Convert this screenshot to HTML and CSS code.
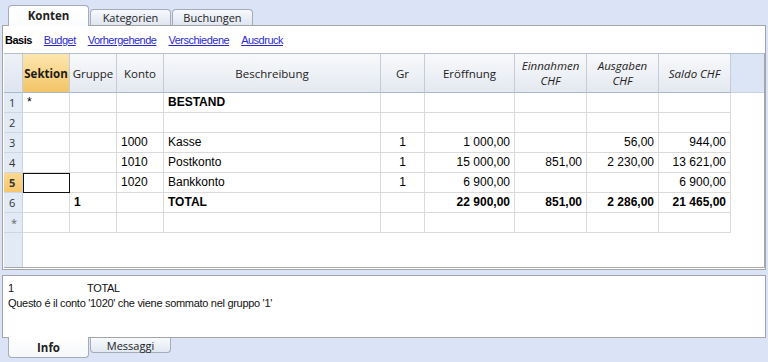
FILE: index.html
```html
<!DOCTYPE html>
<html lang="de">
<head>
<meta charset="utf-8">
<title>Konten</title>
<link rel="stylesheet" href="styles.css">
</head>
<body>
<div class="tabs-top">
  <div class="tab active">Konten</div>
  <div class="tab">Kategorien</div>
  <div class="tab">Buchungen</div>
</div>
<div class="panel">
  <div class="subnav">
    <span class="cur">Basis</span>
    <a href="#">Budget</a>
    <a href="#">Vorhergehende</a>
    <a href="#">Verschiedene</a>
    <a href="#">Ausdruck</a>
  </div>
  <div class="grid">
    <div class="row head">
      <div class="h rn"></div>
      <div class="h sel">Sektion</div>
      <div class="h">Gruppe</div>
      <div class="h">Konto</div>
      <div class="h">Beschreibung</div>
      <div class="h">Gr</div>
      <div class="h">Eröffnung</div>
      <div class="h it">Einnahmen<br>CHF</div>
      <div class="h it">Ausgaben<br>CHF</div>
      <div class="h it">Saldo CHF</div>
      <div class="fill"></div>
    </div>
    <div class="row">
      <div class="c rn">1</div><div class="c">*</div><div class="c"></div><div class="c"></div><div class="c b">BESTAND</div><div class="c"></div><div class="c"></div><div class="c"></div><div class="c"></div><div class="c"></div>
    </div>
    <div class="row">
      <div class="c rn">2</div><div class="c"></div><div class="c"></div><div class="c"></div><div class="c"></div><div class="c"></div><div class="c"></div><div class="c"></div><div class="c"></div><div class="c"></div>
    </div>
    <div class="row">
      <div class="c rn">3</div><div class="c"></div><div class="c"></div><div class="c">1000</div><div class="c">Kasse</div><div class="c ctr">1</div><div class="c num">1 000,00</div><div class="c num"></div><div class="c num">56,00</div><div class="c num">944,00</div>
    </div>
    <div class="row">
      <div class="c rn">4</div><div class="c"></div><div class="c"></div><div class="c">1010</div><div class="c">Postkonto</div><div class="c ctr">1</div><div class="c num">15 000,00</div><div class="c num">851,00</div><div class="c num">2 230,00</div><div class="c num">13 621,00</div>
    </div>
    <div class="row">
      <div class="c rn cur-rn">5</div><div class="c focus"></div><div class="c"></div><div class="c">1020</div><div class="c">Bankkonto</div><div class="c ctr">1</div><div class="c num">6 900,00</div><div class="c num"></div><div class="c num"></div><div class="c num">6 900,00</div>
    </div>
    <div class="row">
      <div class="c rn">6</div><div class="c"></div><div class="c b">1</div><div class="c"></div><div class="c b">TOTAL</div><div class="c"></div><div class="c num b">22 900,00</div><div class="c num b">851,00</div><div class="c num b">2 286,00</div><div class="c num b">21 465,00</div>
    </div>
    <div class="row">
      <div class="c rn star">*</div><div class="c"></div><div class="c"></div><div class="c"></div><div class="c"></div><div class="c"></div><div class="c"></div><div class="c"></div><div class="c"></div><div class="c"></div>
    </div>
  </div>
</div>
<div class="splitter"></div>
<div class="info">
  <div class="line"><span class="k">1</span>TOTAL</div>
  <div class="line">Questo é il conto '1020' che viene sommato nel gruppo '1'</div>
</div>
<div class="tabs-bottom">
  <div class="btab active">Info</div>
  <div class="btab">Messaggi</div>
</div>
</body>
</html>
```
FILE: styles.css
```css
* { box-sizing: border-box; }
html, body { margin: 0; padding: 0; }
body {
  width: 768px;
  height: 362px;
  overflow: hidden;
  background: #dae4f6;
  font-family: "Liberation Sans", Arial, sans-serif;
  color: #000;
}

/* top tabs */
.tabs-top {
  height: 25px;
  display: flex;
  align-items: flex-end;
  gap: 1px;
  padding-left: 8px;
}
.tab {
  width: 81px;
  height: 16px;
  border: 1px solid #a3acb8;
  border-bottom: none;
  border-radius: 4px 4px 0 0;
  background: linear-gradient(#f7f9fc, #dfe6f1);
  font-family: "Open Sans", "Noto Sans", sans-serif;
  font-size: 11px;
  color: #222;
  text-align: center;
  line-height: 15px;
}
.tab.active {
  height: 21px;
  margin-bottom: -1px;
  position: relative;
  z-index: 1;
  background: linear-gradient(#ffffff, #fbfcfd);
  font-weight: 700;
  line-height: 20px;
  font-size: 11.5px;
}

/* main panel */
.panel {
  margin: 0 2px 0 2px;
  height: 245px;
  border: 1px solid #a4a4a4;
  background: #fff;
  display: flex;
  flex-direction: column;
}
.subnav {
  height: 27px;
  display: flex;
  align-items: center;
  gap: 12px;
  padding-left: 2px;
  font-size: 11px;
  letter-spacing: -0.5px;
}
.subnav .cur { font-weight: 700; }
.subnav a { color: #2a2ad0; text-decoration: underline; }

.grid {
  flex: 1;
  margin: 0 0 1px 1px;
  border-top: 1px solid #b4bfcd;
  border-right: 1px solid #a8a8a8;
  border-bottom: 1px solid #a8a8a8;
  background:
    linear-gradient(to right, #e2eaf6 0, #e2eaf6 18px, #c9d3e0 18px, #c9d3e0 19px, #fff 19px);
}
.row {
  display: grid;
  grid-template-columns: 19px 47px 47px 47px 217px 44px 90px 72px 72px 72px 1fr;
  height: 20px;
}
.row.head { height: 39px; }

.h {
  background: linear-gradient(#f8f9fb, #e4e9f0);
  border-right: 1px solid #c3ccd8;
  border-bottom: 1px solid #a9b8cb;
  display: flex;
  align-items: center;
  justify-content: center;
  text-align: center;
  font-family: "Open Sans", "Noto Sans", sans-serif;
  font-size: 11.5px;
  color: #222;
  line-height: 15px;
}
.h.rn { background: linear-gradient(#eef2f8, #dde5f1); }
.h.sel {
  background: linear-gradient(#fde7b0, #f4c466);
  font-weight: 700;
  color: #1a1a1a;
}
.h.it { font-style: italic; }
.fill {
  background: #dce5f5;
  border-bottom: 1px solid #c8d3e3;
}

.c {
  border-right: 1px solid #dadada;
  border-bottom: 1px solid #dadada;
  padding: 0 4px;
  font-size: 12px;
  line-height: 19px;
  white-space: nowrap;
  overflow: hidden;
  background: #fff;
}
.c.rn {
  background: #e2eaf6;
  border-right: 1px solid #c9d3e0;
  border-bottom: 1px solid #cdd6e2;
  font-family: "Open Sans", "Noto Sans", sans-serif;
  font-size: 11px;
  color: #333;
  padding-left: 5px;
}
.c.rn.cur-rn {
  background: linear-gradient(#fbd992, #f5c66b);
  font-weight: 700;
}
.c.rn.star { color: #666; padding-left: 7px; }
.c.b { font-weight: 700; }
.c.num { text-align: right; }
.c.ctr { text-align: center; }
.c.focus {
  outline: 1px solid #111;
  outline-offset: -1px;
}

.splitter { height: 5px; }

/* info panel */
.info {
  margin: 0 2px;
  height: 63px;
  border: 1px solid #a4a4a4;
  background: #fff;
  padding: 5px 0 0 5px;
  font-size: 11px;
  letter-spacing: -0.3px;
  line-height: 15px;
  color: #111;
}
.info .k { display: inline-block; width: 79px; }

/* bottom tabs */
.tabs-bottom {
  display: flex;
  align-items: flex-start;
  gap: 1px;
  padding-left: 8px;
}
.btab {
  width: 81px;
  height: 15px;
  border: 1px solid #a3acb8;
  border-top: none;
  border-radius: 0 0 4px 4px;
  background: linear-gradient(#f8fafd, #e1e8f2);
  font-family: "Open Sans", "Noto Sans", sans-serif;
  font-size: 11px;
  color: #222;
  text-align: center;
  line-height: 15px;
}
.btab.active {
  height: 21px;
  margin-top: -1px;
  position: relative;
  z-index: 1;
  background: linear-gradient(#ffffff, #f6f7f9);
  font-weight: 700;
  font-size: 11.5px;
  line-height: 21px;
}
```
